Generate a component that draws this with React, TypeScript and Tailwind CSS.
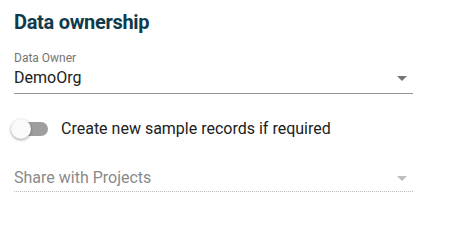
export default function App() {
  return (
    <div className="w-[450px] h-[233px] bg-white font-['Roboto',sans-serif] px-[14px] pt-[10px]">
      <h1 className="text-[20px] leading-[24px] font-bold tracking-[-0.3px] text-[#0f3b4d]">Data ownership</h1>

      <div className="w-[399px] mt-[16px]">
        <div className="text-[12px] leading-[16px] text-[#757575]">Data Owner</div>
        <div className="flex items-center justify-between border-b border-[#949494] pb-[3px]">
          <span className="text-[16px] leading-[24px] text-[#212121]">DemoOrg</span>
          <svg width="10" height="5" viewBox="0 0 10 5" className="mr-[6px] mt-[1px]">
            <path d="M0 0h10L5 5z" fill="#757575" />
          </svg>
        </div>
      </div>

      <div className="flex items-center mt-[23px] h-[24px]">
        <div className="relative w-[34px] h-[14px] rounded-full bg-[#9e9e9e]">
          <div className="absolute -left-[3px] -top-[3px] w-[20px] h-[20px] rounded-full bg-[#fafafa] shadow-[0_1px_3px_rgba(0,0,0,0.4)]" />
        </div>
        <span className="ml-[13px] text-[16px] leading-[24px] text-[#212121]">
          Create new sample records if required
        </span>
      </div>

      <div className="w-[399px] mt-[25px] flex items-center justify-between border-b border-dotted border-[#bdbdbd] pb-[1px]">
        <span className="text-[16px] leading-[24px] text-[#8a8a8a]">Share with Projects</span>
        <svg width="10" height="5" viewBox="0 0 10 5" className="mr-[6px] mt-[1px]">
          <path d="M0 0h10L5 5z" fill="#bdbdbd" />
        </svg>
      </div>
    </div>
  );
}
